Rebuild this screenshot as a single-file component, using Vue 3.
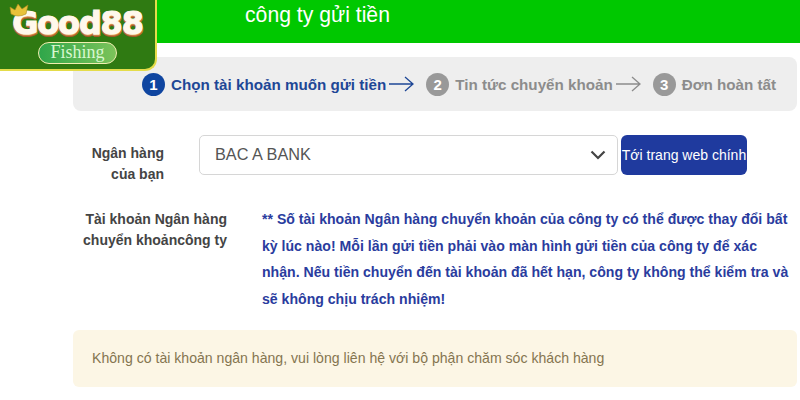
<template>
  <div class="page">
    <header class="topbar">
      <h1 class="title">công ty gửi tiền</h1>
    </header>

    <div class="logo">
      <svg class="crown" viewBox="0 0 22 16" width="22" height="16">
        <path d="M2 11 L1 4 L6 7 L9 1 L13 6 L19 2 L17 11 Q9 15 2 11 Z" fill="#e8c23a" stroke="#a8891c" stroke-width="0.6" />
      </svg>
      <div class="logo-name">Good88</div>
      <div class="logo-sub">Fishing</div>
    </div>

    <main class="content">
      <div class="steps">
        <div class="step active">
          <span class="num">1</span>
          <span class="step-text">Chọn tài khoản muốn gửi tiền</span>
          <svg class="arrow" viewBox="0 0 26 16" width="26" height="16">
            <path d="M0 8 H24 M16 1 L24 8 L16 15" fill="none" stroke="currentColor" stroke-width="1.3" />
          </svg>
        </div>
        <div class="step">
          <span class="num">2</span>
          <span class="step-text">Tin tức chuyển khoản</span>
          <svg class="arrow" viewBox="0 0 26 16" width="26" height="16">
            <path d="M0 8 H24 M16 1 L24 8 L16 15" fill="none" stroke="currentColor" stroke-width="1.3" />
          </svg>
        </div>
        <div class="step">
          <span class="num">3</span>
          <span class="step-text">Đơn hoàn tất</span>
        </div>
      </div>

      <div class="row bank-row">
        <label class="label">Ngân hàng<br />của bạn</label>
        <div class="select">
          <span>BAC A BANK</span>
          <svg viewBox="0 0 16 10" width="16" height="10">
            <path d="M1.5 1.5 L8 8 L14.5 1.5" fill="none" stroke="#444" stroke-width="2.2" />
          </svg>
        </div>
        <button class="go-btn">Tới trang web chính</button>
      </div>

      <div class="row account-row">
        <label class="label">Tài khoản Ngân hàng<br />chuyển khoảncông ty</label>
        <p class="notice">** Số tài khoản Ngân hàng chuyển khoản của công ty có thể được thay đổi bất kỳ lúc nào! Mỗi lần gửi tiền phải vào màn hình gửi tiền của công ty để xác nhận. Nếu tiền chuyển đến tài khoản đã hết hạn, công ty không thể kiểm tra và sẽ không chịu trách nhiệm!</p>
      </div>

      <div class="alert">Không có tài khoản ngân hàng, vui lòng liên hệ với bộ phận chăm sóc khách hàng</div>
    </main>
  </div>
</template>

<script setup>
</script>

<style>
html, body { background: #fff; }
</style>

<style scoped>
.page {
  position: relative;
  width: 800px;
  height: 400px;
  overflow: hidden;
  font-family: "Liberation Sans", Arial, sans-serif;
  background: #fff;
}

.topbar {
  height: 43px;
  background: #00c800;
  padding-left: 245px;
}

.title {
  margin: 0;
  font-size: 21.2px;
  font-weight: 400;
  line-height: 30px;
  color: #fff;
}

.logo {
  position: absolute;
  left: 0;
  top: 0;
  width: 155px;
  height: 69px;
  background: #2f7a12;
  border: solid #e4dc4a;
  border-width: 0 2px 2px 0;
  border-bottom-right-radius: 12px;
  text-align: center;
}

.crown {
  position: absolute;
  left: 9px;
  top: 3px;
}

.logo-name {
  margin-top: 5px;
  font-family: "DejaVu Sans", sans-serif;
  font-weight: 700;
  font-size: 32px;
  line-height: 36px;
  letter-spacing: -1.2px;
  color: #fff8ec;
  -webkit-text-stroke: 1px #fff8ec;
  text-shadow: 0 1px 0 #f0c890, 0 2px 0 #c98045, 0 3px 0 #a5582a, 1px 2px 0 #c98045, -1px 2px 0 #c98045;
}

.logo-sub {
  width: 79px;
  height: 22px;
  margin: 1px auto 0;
  box-sizing: border-box;
  border: 1.5px solid #f2edb0;
  border-radius: 11px;
  background: linear-gradient(90deg, #2fa64a, #7cc35a);
  font-family: "Liberation Serif", serif;
  font-size: 18px;
  line-height: 18px;
  color: #d8f7d0;
}

.content {
  margin-left: 73px;
  width: 724px;
}

.steps {
  display: flex;
  align-items: center;
  height: 54px;
  margin-top: 14px;
  padding-left: 69px;
  box-sizing: border-box;
  background: #eeeeee;
  border-radius: 0 8px 8px 8px;
  gap: 11px;
}

.step {
  display: flex;
  align-items: center;
  gap: 6px;
  color: #8c8c8c;
  font-size: 15.2px;
  font-weight: 700;
}

.step.active {
  color: #1e4796;
}

.step .arrow {
  margin-left: -3px;
}

.num {
  display: flex;
  align-items: center;
  justify-content: center;
  width: 23px;
  height: 23px;
  border-radius: 50%;
  background: #999;
  color: #fff;
  font-size: 15px;
  font-weight: 700;
}

.step.active .num {
  background: #0f45a0;
}

.row {
  display: flex;
}

.label {
  flex: none;
  width: 154px;
  text-align: right;
  font-size: 14px;
  font-weight: 700;
  line-height: 21px;
  color: #444;
}

.bank-row {
  margin-top: 24px;
  align-items: flex-start;
}

.bank-row .label {
  width: 91px;
  margin-right: 35px;
  padding-top: 8px;
}

.select {
  display: flex;
  align-items: center;
  justify-content: space-between;
  box-sizing: border-box;
  width: 419px;
  height: 40px;
  padding: 0 11px 0 15px;
  border: 1px solid #d6d6d6;
  border-radius: 5px;
  background: #fff;
  font-size: 16.3px;
  line-height: 36px;
  color: #555;
}

.select span {
  margin-top: -2px;
}

.go-btn {
  width: 126px;
  height: 40px;
  margin-left: 3px;
  padding: 0;
  border: none;
  border-radius: 6px;
  background: #1f3a9e;
  color: #fff;
  font-family: inherit;
  font-size: 14px;
  white-space: nowrap;
}

.account-row {
  margin-top: 24px;
}

.notice {
  flex: none;
  width: 535px;
  margin: -3px 0 0 35px;
  font-size: 14.1px;
  font-weight: 700;
  line-height: 26.67px;
  color: #2a3c9e;
}

.alert {
  margin-top: 17px;
  height: 57px;
  padding-left: 19px;
  box-sizing: border-box;
  background: #fcf6e5;
  border-radius: 6px;
  font-size: 14.1px;
  line-height: 57px;
  color: #857550;
}
</style>
